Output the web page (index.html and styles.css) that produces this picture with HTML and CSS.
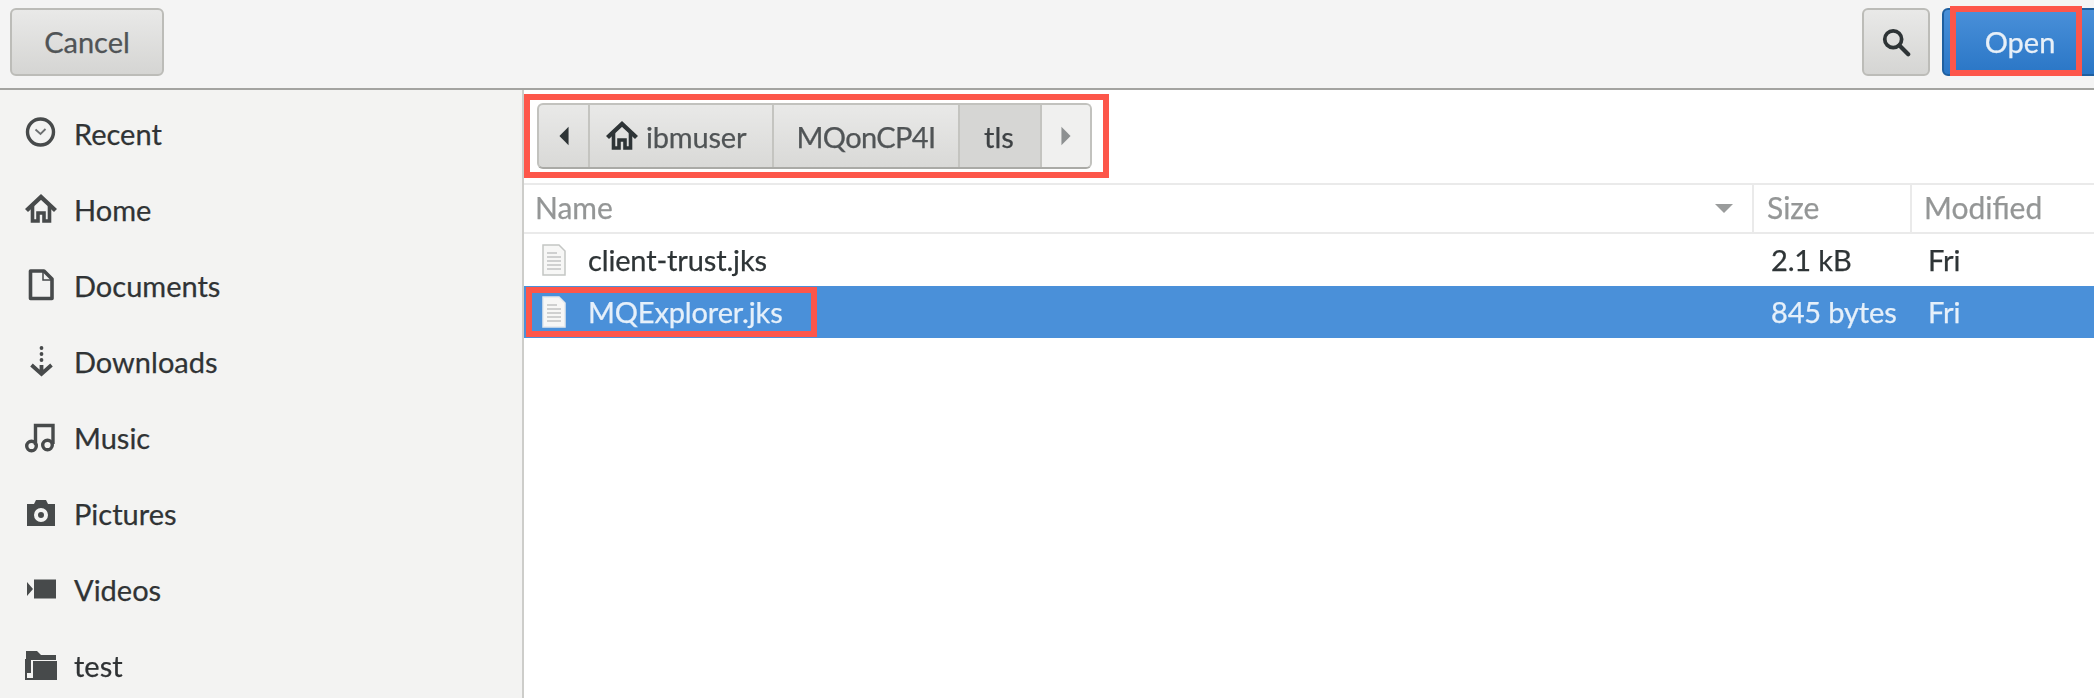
FILE: index.html
```html
<!DOCTYPE html>
<html lang="en">
<head>
<meta charset="utf-8">
<title>Open File</title>
<link rel="stylesheet" href="styles.css">
</head>
<body>
<div class="dialog">
  <header class="titlebar">
    <button class="btn btn-cancel">Cancel</button>
    <div class="spacer"></div>
    <button class="btn btn-search" aria-label="Search">
      <svg class="ico-search" viewBox="0 0 32 32"><circle cx="13" cy="13" r="9" fill="none" stroke="#2e3436" stroke-width="4"/><path d="M20 20 29 29" stroke="#2e3436" stroke-width="4.5" stroke-linecap="round"/></svg>
    </button>
    <button class="btn btn-open"><span class="mark mark-open"></span>Open</button>
  </header>
  <div class="content">
    <nav class="sidebar">
      <div class="place"><svg class="ico" viewBox="0 0 32 32"><circle cx="15.5" cy="15" r="13" fill="none" stroke="#474a4b" stroke-width="3.400"/><path d="M10.500 12.500 15.500 17 20.500 12" fill="none" stroke="#6d7071" stroke-width="1.800"/></svg>Recent</div>
      <div class="place"><svg class="ico" viewBox="0 0 32 32"><path d="M1.500 17.500 16 4 30.500 17.500" fill="none" stroke="#474a4b" stroke-width="4.400"/><path d="M7.500 13V28H13V20H19V28H24.500V13" fill="none" stroke="#474a4b" stroke-width="3.600"/></svg>Home</div>
      <div class="place"><svg class="ico" viewBox="0 0 32 32"><path d="M5.500 2H19L27 10V29.500H5.500Z" fill="none" stroke="#474a4b" stroke-width="3.600" stroke-linejoin="round"/><path d="M18 2V11H27" fill="none" stroke="#474a4b" stroke-width="1.500"/></svg>Documents</div>
      <div class="place"><svg class="ico" viewBox="0 0 32 32"><circle cx="16.500" cy="3" r="1.900" fill="#474a4b"/><circle cx="16.500" cy="9" r="1.900" fill="#474a4b"/><circle cx="16.500" cy="15" r="1.900" fill="#474a4b"/><path d="M16.500 20V27M6.500 20 16.500 29 26.500 20" fill="none" stroke="#474a4b" stroke-width="3.800"/></svg>Downloads</div>
      <div class="place"><svg class="ico" viewBox="0 0 32 32"><circle cx="6.500" cy="25" r="4.800" fill="none" stroke="#474a4b" stroke-width="3.400"/><circle cx="22.500" cy="24" r="4.800" fill="none" stroke="#474a4b" stroke-width="3.400"/><path d="M10.500 24V4.500H28V23" fill="none" stroke="#474a4b" stroke-width="3.400"/></svg>Music</div>
      <div class="place"><svg class="ico" viewBox="0 0 32 32"><path fill-rule="evenodd" d="M2 7H9L11 3H21L23 7H30V29H2ZM16 11A7 7 0 1 0 16 25 7 7 0 1 0 16 11ZM16 15A3 3 0 1 1 16 21 3 3 0 1 1 16 15Z" fill="#474a4b"/></svg>Pictures</div>
      <div class="place"><svg class="ico" viewBox="0 0 32 32"><path d="M9 6.500H31V25.500H9ZM2 9 8 16 2 23Z" fill="#474a4b"/></svg>Videos</div>
      <div class="place"><svg class="ico" viewBox="0 0 32 32"><path d="M1 2H12L16 6H31V11H6V24H2L1 23Z" fill="#474a4b"/><path d="M8 12H32V31H8Z" fill="#474a4b"/><path d="M1 10V30H31" fill="none" stroke="#474a4b" stroke-width="2"/></svg>test</div>
    </nav>
    <main class="files">
      <div class="pathzone">
        <div class="pathmark">
          <div class="pathbar">
            <div class="seg seg-nav"><svg class="arrow" viewBox="0 0 12 24"><path d="M11 2V22L1 12Z" fill="#2e3436"/></svg></div>
            <div class="seg seg-home"><svg class="ico-home" viewBox="0 0 32 32"><path d="M1.500 17.500 16 4 30.500 17.500" fill="none" stroke="#2e3436" stroke-width="4.400"/><path d="M7.500 13V28H13V20H19V28H24.500V13" fill="none" stroke="#2e3436" stroke-width="3.600"/></svg>ibmuser</div>
            <div class="seg seg-mq">MQonCP4I</div>
            <div class="seg seg-tls">tls</div>
            <div class="seg seg-next"><svg class="arrow" viewBox="0 0 12 24"><path d="M1 2V22L11 12Z" fill="#8d9091"/></svg></div>
          </div>
        </div>
      </div>
      <div class="row head">
        <div class="col-name">Name<svg class="sort" viewBox="0 0 18 10"><path d="M0 0H18L9 9Z" fill="#9a9c9c"/></svg></div>
        <div class="col-size">Size</div>
        <div class="col-date">Modified</div>
      </div>
      <div class="row file">
        <div class="col-name"><svg class="doc" viewBox="0 0 24 32"><path d="M1 1H17L23 7V31H1Z" fill="#f7f7f6" stroke="#c4c6c4" stroke-width="1.500"/><path d="M5 9H15M5 13H19M5 17H19M5 21H19M5 25H19" stroke="#c2c4c3" stroke-width="1.500"/></svg>client-trust.jks</div>
        <div class="col-size">2.1 kB</div>
        <div class="col-date">Fri</div>
      </div>
      <div class="row file selected">
        <div class="col-name"><span class="mark mark-file"></span><svg class="doc" viewBox="0 0 24 32"><path d="M1 1H17L23 7V31H1Z" fill="#f7f7f6" stroke="#e4e8ec" stroke-width="1.500"/><path d="M5 9H15M5 13H19M5 17H19M5 21H19M5 25H19" stroke="#c2c4c3" stroke-width="1.500"/></svg>MQExplorer.jks</div>
        <div class="col-size">845 bytes</div>
        <div class="col-date">Fri</div>
      </div>
    </main>
  </div>
</div>
</body>
</html>
```
FILE: styles.css
```css
* { box-sizing: border-box; }
html, body { margin: 0; padding: 0; }
body {
  width: 2094px;
  height: 698px;
  overflow: hidden;
  background: #fff;
  color: #2e3436;
  font-family: "Lato", "Noto Sans", sans-serif;
  font-size: 29px;
  -webkit-text-stroke: 0.25px currentColor;
}
.dialog { width: 2094px; height: 698px; display: flex; flex-direction: column; filter: blur(0.7px); }

.titlebar {
  height: 90px;
  flex: none;
  display: flex;
  align-items: flex-start;
  padding: 8px 0 0 10px;
  background: #f4f4f4;
  border-bottom: 2px solid #a3a3a0;
}
.spacer { flex: 1; }
.btn {
  height: 68px;
  font: inherit;
  color: #505456;
  border: 2px solid #bcbcb8;
  border-radius: 6px;
  background: linear-gradient(#e9e9e8, #d5d5d3);
  display: flex;
  align-items: center;
  justify-content: center;
  padding: 0;
}
.btn-cancel { width: 154px; padding-bottom: 2px; }
.btn-search { width: 68px; margin-right: 12px; }
.ico-search { width: 30px; height: 30px; }
.btn-open {
  width: 160px;
  margin-right: -8px;
  padding-right: 4px;
  padding-bottom: 2px;
  position: relative;
  color: #e8f0f8;
  background: linear-gradient(#4a90d9, #2a76c6);
  border-color: #1f5f9f;
}
.mark { position: absolute; border: 6px solid #fd564a; }
.mark-open { left: 6px; top: -4px; width: 132px; height: 70px; }

.content { flex: 1; display: flex; min-height: 0; }
.sidebar {
  width: 524px;
  flex: none;
  padding-top: 5px;
  background: #f3f3f2;
  border-right: 2px solid #cdcdca;
}
.place { height: 76px; display: flex; align-items: center; padding-left: 25px; gap: 17px; color: #303335; }
.ico { width: 32px; height: 32px; flex: none; }

.files { flex: 1; min-width: 0; display: flex; flex-direction: column; }
.pathzone { height: 93px; flex: none; padding: 4px 0 0 0; }
.pathmark {
  width: 585px;
  height: 84px;
  border: 6px solid #fd564a;
  padding: 3px 0 0 7px;
}
.pathbar {
  width: 555px;
  height: 66px;
  display: flex;
  border: 2px solid #c2c2be;
  border-radius: 6px;
  overflow: hidden;
  background: linear-gradient(#e9e9e8, #d9d9d7);
  border-bottom-color: #aaaaa6;
  color: #505456;
}
.seg { display: flex; align-items: center; justify-content: center; border-right: 2px solid #c4c4c0; height: 100%; flex: none; }
.seg-nav { width: 51px; }
.seg-home { width: 184px; gap: 8px; justify-content: flex-start; padding-left: 16px; letter-spacing: -0.2px; }
.seg-mq { width: 186px; letter-spacing: -0.6px; }
.seg-tls { width: 82px; background: #d6d6d4; color: #3e4244; padding-right: 2px; }
.seg-next { flex: 1; border-right: 0; background: #f0f0ef; }
.arrow { width: 12px; height: 22px; }
.ico-home { width: 32px; height: 32px; }

.row { display: flex; align-items: center; }
.col-name { width: 1230px; flex: none; display: flex; align-items: center; position: relative; }
.col-size { width: 158px; flex: none; }
.col-date { flex: 1; }

.head {
  height: 51px;
  flex: none;
  border-top: 2px solid #eaeaea;
  border-bottom: 2px solid #eaeaea;
  color: #949696;
  font-size: 30px;
}
.head .col-name { height: 100%; padding: 0 0 4px 11px; border-right: 2px solid #eaeaea; }
.head .col-size { height: 100%; display: flex; align-items: center; padding: 0 0 4px 13px; border-right: 2px solid #eaeaea; }
.head .col-date { padding: 0 0 4px 12px; }
.sort { width: 18px; height: 10px; position: absolute; left: 1191px; top: 19px; }

.file { height: 52px; flex: none; padding-bottom: 2px; letter-spacing: -0.15px; }
.file .col-name { padding-left: 18px; gap: 22px; height: 100%; }
.doc { width: 24px; height: 32px; flex: none; margin-top: 2px; }
.file .col-size { padding-left: 17px; }
.file .col-date { padding-left: 16px; }
.selected { background: #4a90d9; color: #e6f0fa; }
.mark-file { left: 2px; top: 1px; width: 291px; height: 50px; }
```
